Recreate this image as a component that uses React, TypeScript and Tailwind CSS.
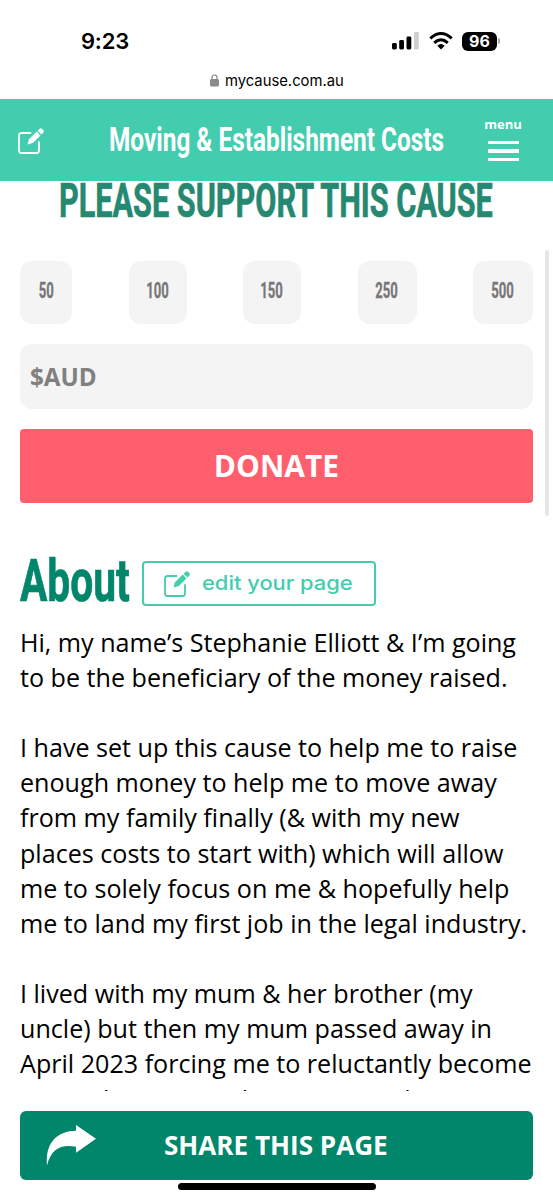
import React from "react";

const COND = "font-['Roboto',sans-serif] font-bold whitespace-nowrap block";
const AMOUNTS = [
  { v: "50", w: "w-[52px]" },
  { v: "100", w: "w-[58px]" },
  { v: "150", w: "w-[58px]" },
  { v: "250", w: "w-[59px]" },
  { v: "500", w: "w-[60px]" },
];

function EditIcon({ className }: { className?: string }) {
  return (
    <svg viewBox="0 0 26 26" className={className} fill="none">
      <path d="M12.5 5H3.5Q1 5 1 7.500V22.500Q1 25 3.500 25H18.500Q21 25 21 22.500V14" stroke="currentColor" strokeWidth="1.8" strokeLinecap="round" />
      <path d="M9.500 16.500L11 11.300L18.700 3.600L22.500 7.400L14.800 15.100Z" fill="currentColor" />
      <path d="M19.700 2.700L21.700 .7Q23 -.2 24.400 1.200L25 1.800Q26.300 3.200 25.400 4.400L23.400 6.400Z" fill="currentColor" />
    </svg>
  );
}

const LINES = [
  "Hi, my name’s Stephanie Elliott & I’m going",
  "to be the beneficiary of the money raised.",
  "",
  "I have set up this cause to help me to raise",
  "enough money to help me to move away",
  "from my family finally (& with my new",
  "places costs to start with) which will allow",
  "me to solely focus on me & hopefully help",
  "me to land my first job in the legal industry.",
  "",
  "I lived with my mum & her brother (my",
  "uncle) but then my mum passed away in",
  "April 2023 forcing me to reluctantly become",
  "my orphan overnight, moving as having",
];

export default function App() {
  return (
    <div className="flex h-[1200px] w-[553px] flex-col overflow-hidden bg-white font-['Open_Sans',sans-serif] text-black">
      <div className="flex h-[60px] shrink-0 items-start justify-between pl-[81px] pr-[53px]">
        <span className="mt-[26px] font-['Inter',sans-serif] text-[22px] leading-[30px] font-semibold tracking-[-0.2px]">9:23</span>
        <div className="mt-[31px] flex items-center">
          <svg viewBox="0 0 28 20" className="h-5 w-7">
            <rect x="1" y="12" width="4.800" height="6.500" rx="1.400" />
            <rect x="8.200" y="9" width="4.800" height="9.500" rx="1.400" />
            <rect x="15.500" y="5.500" width="4.800" height="13" rx="1.400" />
            <rect x="23" y="1" width="4.800" height="17.500" rx="1.400" fill="#cfcfcf" />
          </svg>
          <svg viewBox="0 0 24 20" className="ml-[10px] h-5 w-6" fill="none" stroke="black" strokeWidth="3">
            <path d="M1.300 7.300Q12-2.300 22.700 7.300" />
            <path d="M5.200 11.800Q12 5.800 18.800 11.800" />
            <path d="M8.300 14.700Q12 11.500 15.700 14.700L12 18.500Z" fill="black" stroke="none" />
          </svg>
          <div className="ml-[9px] flex h-[19px] w-[35px] items-center justify-center rounded-[6px] bg-black font-['Inter',sans-serif] text-[16px] font-bold text-white">96</div>
          <div className="ml-[1px] h-[6px] w-[2px] rounded-r bg-[#aaa]" />
        </div>
      </div>
      <div className="flex h-[39px] shrink-0 items-start pl-[210px]">
        <svg viewBox="0 0 9 13" className="mt-[14px] h-[13px] w-[9px]">
          <path d="M2 6V3.500Q2 1 4.500 1T7 3.500V6" fill="none" stroke="#8a8a8a" strokeWidth="1.200" />
          <rect y="5" width="9" height="7.500" rx="1.500" fill="#8a8a8a" />
        </svg>
        <span className="ml-[6px] mt-[10px] font-['Inter',sans-serif] text-[14.8px] leading-[22px]">mycause.com.au</span>
      </div>
      <header className="flex h-[82px] shrink-0 items-start bg-[#43cdae] text-white">
        <EditIcon className="mt-[29px] ml-[18px] h-[26px] w-[26px] shrink-0" />
        <div className="mt-[20px] ml-[65px] w-[335px]">
          <span className={`${COND} origin-left scale-x-[0.717] text-[34px] leading-[40px]`}>Moving &amp; Establishment Costs</span>
        </div>
        <div className="mt-[18px] ml-[40px] flex w-[38px] flex-col items-center">
          <span className="text-[13px] leading-[15px] font-bold">menu</span>
          <div className="mt-[9px] flex flex-col gap-[5px]">
            <div className="h-[3px] w-[31px] bg-white" />
            <div className="h-[4px] w-[31px] bg-white" />
            <div className="h-[3px] w-[31px] bg-white" />
          </div>
        </div>
      </header>
      <div className="flex h-[910px] shrink-0 overflow-hidden">
        <main className="ml-[20px] flex w-[513px] shrink-0 flex-col">
          <div className="h-[80px] w-full shrink-0 pl-[39px]">
            <span className={`${COND} -mt-[5px] w-[435px] origin-left scale-x-[0.625] text-[49px] leading-[50px] text-[#258870] [-webkit-text-stroke:0.7px_#258870]`}>PLEASE SUPPORT THIS CAUSE</span>
          </div>
          <div className="flex h-[63px] shrink-0 justify-between">
            {AMOUNTS.map((a) => (
              <div key={a.v} className={`flex ${a.w} justify-center rounded-[12px] bg-[#f4f4f4] pt-[16px]`}>
                <span className={`${COND} scale-x-[0.61] text-[21.500px] leading-[28px] text-[#777] [-webkit-text-stroke:0.3px_#777]`}>{a.v}</span>
              </div>
            ))}
          </div>
          <div className="mt-[20px] flex h-[65px] shrink-0 items-center rounded-[12px] bg-[#f4f4f4] pt-[2px] pl-[10px] text-[24.200px] font-bold text-[#808080]">$AUD</div>
          <div className="mt-[20px] flex h-[74px] shrink-0 items-center justify-center rounded-[4px] bg-[#ff5f6c] pb-[2px] text-[30px] font-bold text-white">DONATE</div>
          <div className="mt-[50px] flex h-[60px] shrink-0">
            <div className="w-[122px]">
              <span className={`${COND} -mt-[2px] origin-left scale-x-[0.69] text-[59px] leading-[60px] text-[#00866a] [-webkit-text-stroke:0.7px_#00866a]`}>About</span>
            </div>
            <div className="mt-[8px] flex h-[45px] w-[234px] items-center rounded-[4px] border-2 border-[#43cdae] pl-[20px] text-[#43cdae]">
              <EditIcon className="h-[26px] w-[26px]" />
              <span className="ml-[12px] block origin-left scale-x-[1.095] whitespace-nowrap pb-[2px] font-['Inter',sans-serif] text-[20px] font-medium">edit your page</span>
            </div>
          </div>
          <div className="mt-[11.700px] shrink-0 text-[25.120px] leading-[35.150px]">
            {LINES.map((l, i) => (
              <p key={i} className="h-[35.150px] whitespace-nowrap">{l}</p>
            ))}
          </div>
        </main>
        <div className="ml-[12px] mt-[69px] h-[266px] w-[4px] rounded-full bg-[#e6e6e6]" />
      </div>
      <footer className="flex flex-col items-center pt-[20px]">
        <div className="flex h-[69px] w-[513px] shrink-0 items-center rounded-[6px] bg-[#00866a] text-white">
          <svg viewBox="0 0 50 41" className="ml-[26px] h-[41px] w-[50px]" fill="currentColor">
            <path d="M30 0L50 13.700L30 27.700V21.700C15 19 5 24 1 40.500C-1 19 10 6 30 5.700Z" />
          </svg>
          <span className="ml-[68px] text-[26.100px] font-bold">SHARE THIS PAGE</span>
        </div>
        <div className="mt-[3px] h-[7px] w-[198px] rounded-full bg-black" />
      </footer>
    </div>
  );
}
